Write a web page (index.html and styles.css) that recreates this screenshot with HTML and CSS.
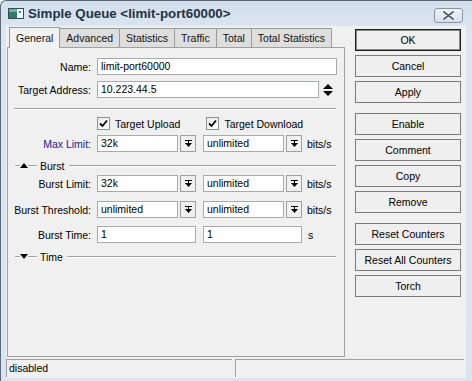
FILE: index.html
```html
<!DOCTYPE html>
<html lang="en">
<head>
    <meta charset="UTF-8">
    <meta name="viewport" content="width=device-width, initial-scale=1.0">
    <title>Simple Queue</title>
    <link rel="stylesheet" href="styles.css">
</head>
<body>

<div class="window">
    <div class="titlebar">
        <svg class="app-icon" width="16" height="11" viewBox="0 0 16 11">
            <rect x="0.5" y="0.5" width="15" height="10" fill="#f4f8fb" stroke="#3a4652"/>
            <rect x="1" y="1" width="8" height="9" fill="#2f7d68"/>
            <rect x="1" y="1" width="8" height="3" fill="#6fb3a0"/>
            <rect x="11" y="3" width="2" height="2" fill="#4a79b5"/>
        </svg>
        <span class="title">Simple Queue &lt;limit-port60000&gt;</span>
        <div class="close">
            <svg width="13" height="9" viewBox="0 0 13 9">
                <path d="M2 1 L11 8 M11 1 L2 8" stroke="#fff" stroke-width="4" stroke-linecap="round"/>
                <path d="M2 1 L11 8 M11 1 L2 8" stroke="#55606d" stroke-width="2" stroke-linecap="round"/>
            </svg>
        </div>
    </div>

    <div class="client">
        <div class="main">
            <div class="left">
                <div class="tabs">
                    <div class="tab active">General</div>
                    <div class="tab">Advanced</div>
                    <div class="tab">Statistics</div>
                    <div class="tab">Traffic</div>
                    <div class="tab">Total</div>
                    <div class="tab">Total Statistics</div>
                </div>
                <div class="panel">
                    <div class="row first">
                        <div class="label">Name:</div>
                        <div class="field name-field">limit-port60000</div>
                    </div>
                    <div class="row target-row">
                        <div class="label">Target Address:</div>
                        <div class="field target-field">10.223.44.5</div>
                        <svg class="updown" width="10" height="12" viewBox="0 0 10 12">
                            <polygon points="5,0 10,5 0,5" fill="#000"/>
                            <polygon points="0,7 10,7 5,12" fill="#000"/>
                        </svg>
                    </div>

                    <div class="separator"></div>

                    <div class="checks">
                        <div class="check">
                            <span class="box">
                                <svg width="9" height="9" viewBox="0 0 9 9"><path d="M1 4.5 L3.5 7 L8 1.5" fill="none" stroke="#000" stroke-width="1.8"/></svg>
                            </span>
                            Target Upload
                        </div>
                        <div class="check second">
                            <span class="box">
                                <svg width="9" height="9" viewBox="0 0 9 9"><path d="M1 4.5 L3.5 7 L8 1.5" fill="none" stroke="#000" stroke-width="1.8"/></svg>
                            </span>
                            Target Download
                        </div>
                    </div>

                    <div class="row max-row">
                        <div class="label blue">Max Limit:</div>
                        <div class="combo">
                            <div class="field">32k</div>
                            <div class="drop"><svg width="7" height="8" viewBox="0 0 7 8"><rect x="0" y="0" width="7" height="1"/><rect x="3" y="1" width="1" height="2"/><polygon points="0,3 7,3 3.5,7"/></svg></div>
                        </div>
                        <div class="combo gap">
                            <div class="field">unlimited</div>
                            <div class="drop"><svg width="7" height="8" viewBox="0 0 7 8"><rect x="0" y="0" width="7" height="1"/><rect x="3" y="1" width="1" height="2"/><polygon points="0,3 7,3 3.5,7"/></svg></div>
                        </div>
                        <span class="unit">bits/s</span>
                    </div>

                    <div class="section burst">
                        <span class="dash short"></span>
                        <svg class="arrow" width="8" height="5" viewBox="0 0 8 5"><polygon points="4,0 8,5 0,5" fill="#000"/></svg>
                        <span class="dash mid"></span>
                        <span class="section-title">Burst</span>
                        <span class="dash rest"></span>
                    </div>

                    <div class="row burst-limit">
                        <div class="label">Burst Limit:</div>
                        <div class="combo">
                            <div class="field">32k</div>
                            <div class="drop"><svg width="7" height="8" viewBox="0 0 7 8"><rect x="0" y="0" width="7" height="1"/><rect x="3" y="1" width="1" height="2"/><polygon points="0,3 7,3 3.5,7"/></svg></div>
                        </div>
                        <div class="combo gap">
                            <div class="field">unlimited</div>
                            <div class="drop"><svg width="7" height="8" viewBox="0 0 7 8"><rect x="0" y="0" width="7" height="1"/><rect x="3" y="1" width="1" height="2"/><polygon points="0,3 7,3 3.5,7"/></svg></div>
                        </div>
                        <span class="unit">bits/s</span>
                    </div>

                    <div class="row burst-threshold">
                        <div class="label">Burst Threshold:</div>
                        <div class="combo">
                            <div class="field">unlimited</div>
                            <div class="drop"><svg width="7" height="8" viewBox="0 0 7 8"><rect x="0" y="0" width="7" height="1"/><rect x="3" y="1" width="1" height="2"/><polygon points="0,3 7,3 3.5,7"/></svg></div>
                        </div>
                        <div class="combo gap">
                            <div class="field">unlimited</div>
                            <div class="drop"><svg width="7" height="8" viewBox="0 0 7 8"><rect x="0" y="0" width="7" height="1"/><rect x="3" y="1" width="1" height="2"/><polygon points="0,3 7,3 3.5,7"/></svg></div>
                        </div>
                        <span class="unit">bits/s</span>
                    </div>

                    <div class="row burst-time">
                        <div class="label">Burst Time:</div>
                        <div class="field wide">1</div>
                        <div class="field wide gap">1</div>
                        <span class="unit seconds">s</span>
                    </div>

                    <div class="section time">
                        <span class="dash short"></span>
                        <svg class="arrow" width="8" height="5" viewBox="0 0 8 5"><polygon points="0,0 8,0 4,5" fill="#000"/></svg>
                        <span class="dash mid"></span>
                        <span class="section-title">Time</span>
                        <span class="dash rest"></span>
                    </div>
                </div>
            </div>

            <div class="buttons">
                <button class="btn default">OK</button>
                <button class="btn">Cancel</button>
                <button class="btn">Apply</button>
                <button class="btn group">Enable</button>
                <button class="btn">Comment</button>
                <button class="btn">Copy</button>
                <button class="btn">Remove</button>
                <button class="btn group">Reset Counters</button>
                <button class="btn">Reset All Counters</button>
                <button class="btn">Torch</button>
            </div>
        </div>

        <div class="statusbar">
            <div class="status first-status">disabled</div>
            <div class="status second-status"></div>
        </div>
    </div>
</div>

</body>
</html>
```

FILE: styles.css
```css
* {
    box-sizing: border-box;
}

body {
    margin: 0;
    font-family: "Liberation Sans", Arial, sans-serif;
    font-size: 10.5px;
    color: #000;
    background-color: #fff;
}

.window {
    width: 472px;
    height: 381px;
    border-left: 1px solid #5c6878;
    border-top: 1px solid #5c6878;
    border-top-left-radius: 6px;
    background: linear-gradient(#d2deec, #dce6f2 30px, #dae4f0);
    padding: 0 6px 3px 5px;
    display: flex;
    flex-direction: column;
    overflow: hidden;
}

/* title bar */
.titlebar {
    height: 25px;
    display: flex;
    align-items: center;
    flex-shrink: 0;
}

.app-icon {
    margin-left: 2px;
}

.title {
    margin-left: 4px;
    font-weight: bold;
    font-size: 13.3px;
    color: #243242;
}

.close {
    margin-left: auto;
    margin-right: 3px;
    align-self: flex-start;
    margin-top: 7px;
    width: 29px;
    height: 15px;
    border: 1px solid #8894a4;
    border-radius: 3px;
    background: linear-gradient(#eef3f9, #d6e0ec);
    display: flex;
    justify-content: center;
    align-items: center;
}

/* client area */
.client {
    flex: 1;
    background-color: #f0f0f0;
    display: flex;
    flex-direction: column;
}

.main {
    height: 331px;
    display: flex;
}

.left {
    margin: 1px 0 0 1px;
    width: 338px;
    display: flex;
    flex-direction: column;
}

.tabs {
    height: 20px;
    display: flex;
    align-items: flex-end;
    padding-left: 2px;
}

.tab {
    height: 19px;
    padding: 0 6px;
    line-height: 18px;
    border: 1px solid #9a9a9a;
    border-bottom: none;
    margin-right: -1px;
    background-color: #dedede;
    color: #111;
}

.tab.active {
    height: 21px;
    margin-bottom: -1px;
    background-color: #f2f2f2;
    position: relative;
    z-index: 1;
    line-height: 20px;
}

.panel {
    height: 310px;
    border: 1px solid #a0a0a0;
    background-color: #f0f0f0;
    padding-top: 10px;
}

.row {
    display: flex;
    align-items: center;
    height: 17px;
}

.label {
    width: 83px;
    margin-right: 6px;
    text-align: right;
    white-space: nowrap;
}

.label.blue {
    color: #22229a;
}

.field {
    height: 17px;
    border: 1px solid #a7abb0;
    background-color: #fff;
    padding-left: 3px;
    line-height: 15px;
    white-space: nowrap;
    overflow: hidden;
}

.name-field {
    width: 240px;
}

.target-row {
    margin-top: 6px;
}

.target-field {
    width: 222px;
}

.updown {
    margin-left: 4px;
}

.separator {
    margin: 10px 8px 0 6px;
    border-top: 1px solid #a0a0a0;
    border-bottom: 1px solid #fff;
}

.checks {
    display: flex;
    height: 13px;
    margin-top: 7px;
    padding-left: 89px;
    align-items: center;
}

.check {
    display: flex;
    align-items: center;
    white-space: nowrap;
}

.check.second {
    margin-left: 26px;
}

.box {
    width: 13px;
    height: 13px;
    border: 1px solid #8e8f8f;
    background: linear-gradient(135deg, #e8e8e8, #fff);
    margin-right: 5px;
    display: flex;
    align-items: center;
    justify-content: center;
}

.max-row {
    margin-top: 5px;
}

.combo {
    display: flex;
    width: 99px;
    gap: 2px;
}

.combo .field {
    flex: 1;
}

.gap {
    margin-left: 7px;
}

.drop {
    width: 16px;
    height: 17px;
    border: 1px solid #a0a0a0;
    background-color: #f0f0f0;
    display: flex;
    align-items: center;
    justify-content: center;
}

.unit {
    margin-left: 5px;
}

.unit.seconds {
    margin-left: 6px;
}

.section {
    display: flex;
    align-items: center;
    height: 13px;
    margin-top: 7px;
    padding: 0 8px 0 7px;
}

.dash {
    height: 2px;
    border-top: 1px solid #a0a0a0;
    border-bottom: 1px solid #fff;
}

.dash.short {
    width: 5px;
}

.dash.mid {
    width: 9px;
}

.dash.rest {
    flex: 1;
}

.section-title {
    margin: 0 4px 0 3px;
}

.burst-limit {
    margin-top: 3px;
}

.burst-threshold {
    margin-top: 9px;
}

.burst-time {
    margin-top: 8px;
}

.field.wide {
    width: 99px;
}

/* buttons */
.buttons {
    margin: 3px 0 0 10px;
    width: 106px;
    display: flex;
    flex-direction: column;
    gap: 4px;
}

.btn {
    height: 22px;
    border: 1px solid #7a7a7a;
    background-color: #efefef;
    font-family: "Liberation Sans", Arial, sans-serif;
    font-size: 10.5px;
    color: #000;
    padding: 0;
}

.btn.default {
    border: 1px solid #1c1c1c;
    box-shadow: inset 0 0 0 1px #8a8a8a;
}

.btn.group {
    margin-top: 6px;
}

/* status bar */
.statusbar {
    margin-top: 2px;
    height: 18px;
    display: flex;
}

.status {
    height: 18px;
    border-top: 1px solid #a0a0a0;
    border-left: 1px solid #a0a0a0;
    padding-left: 2px;
    line-height: 17px;
}

.first-status {
    width: 226px;
}

.second-status {
    width: 229px;
    margin-left: 3px;
}
```
